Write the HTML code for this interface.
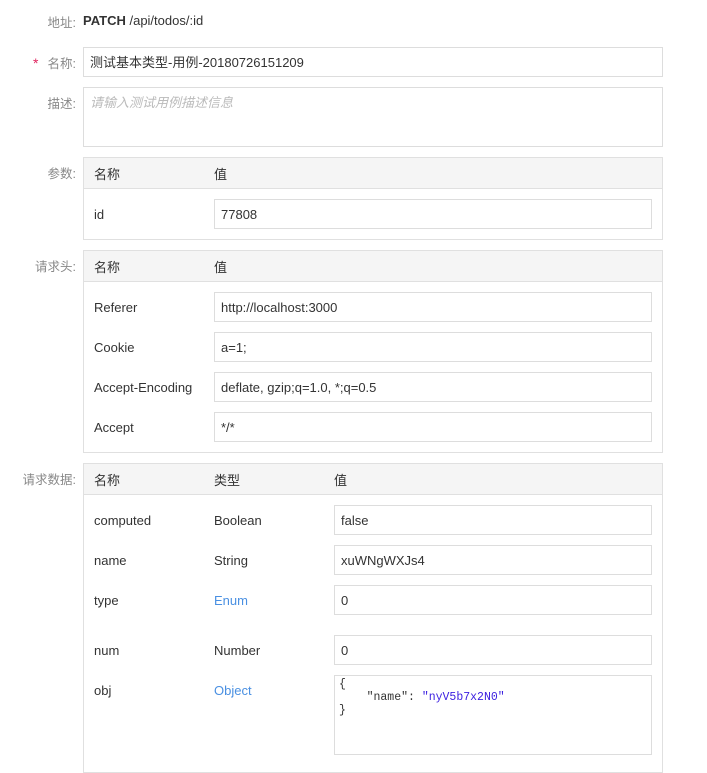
<!DOCTYPE html>
<html><head><meta charset="utf-8"><style>
*{margin:0;padding:0;box-sizing:border-box}
body{width:707px;height:759px;overflow:hidden;background:#fff;font-family:"Liberation Sans","Noto Sans CJK SC",sans-serif;font-size:13px;color:#333;position:relative}
.a{position:absolute;white-space:nowrap}
.lbl{position:absolute;right:631px;color:#888;font-size:12.5px;white-space:nowrap}
.box{position:absolute;border:1px solid #e0e0e0;background:#fff}
.hd{position:absolute;background:#f5f5f5;border-bottom:1px solid #e0e0e0;left:0;right:0;top:0;height:31px}
.in{position:absolute;border:1px solid #ddd;background:#fff;padding-left:6px;line-height:29px;height:30px;font-size:13px;color:#333}
.blue{color:#4a90e2}
</style></head><body>
<div class="lbl" style="top:12px">地址:</div>
<div class="a" style="left:83px;top:13px;font-size:13px"><b>PATCH</b> /api/todos/:id</div>

<div class="a" style="left:33px;top:55px;color:#e0245e;font-size:14px">*</div>
<div class="lbl" style="top:53px">名称:</div>
<div class="in" style="left:83px;top:47px;width:580px">测试基本类型-用例-20180726151209</div>

<div class="lbl" style="top:93px">描述:</div>
<div class="in" style="left:83px;top:87px;width:580px;height:60px;color:#bbb;font-style:italic">请输入测试用例描述信息</div>

<div class="lbl" style="top:163px">参数:</div>
<div class="box" style="left:83px;top:157px;width:580px;height:83px">
<div class="hd"></div>
<div class="a" style="left:10px;top:6px">名称</div><div class="a" style="left:130px;top:6px">值</div>
<div class="a" style="left:10px;top:49px">id</div>
<div class="in" style="left:130px;top:41px;width:438px">77808</div>
</div>

<div class="lbl" style="top:256px">请求头:</div>
<div class="box" style="left:83px;top:250px;width:580px;height:203px">
<div class="hd"></div>
<div class="a" style="left:10px;top:6px">名称</div><div class="a" style="left:130px;top:6px">值</div>
<div class="a" style="left:10px;top:49px">Referer</div><div class="in" style="left:130px;top:41px;width:438px">http://localhost:3000</div>
<div class="a" style="left:10px;top:89px">Cookie</div><div class="in" style="left:130px;top:81px;width:438px">a=1;</div>
<div class="a" style="left:10px;top:129px">Accept-Encoding</div><div class="in" style="left:130px;top:121px;width:438px">deflate, gzip;q=1.0, *;q=0.5</div>
<div class="a" style="left:10px;top:169px">Accept</div><div class="in" style="left:130px;top:161px;width:438px">*/*</div>
</div>

<div class="lbl" style="top:469px">请求数据:</div>
<div class="box" style="left:83px;top:463px;width:580px;height:310px">
<div class="hd"></div>
<div class="a" style="left:10px;top:6px">名称</div><div class="a" style="left:130px;top:6px">类型</div><div class="a" style="left:250px;top:6px">值</div>
<div class="a" style="left:10px;top:49px">computed</div><div class="a" style="left:130px;top:49px">Boolean</div><div class="in" style="left:250px;top:41px;width:318px">false</div>
<div class="a" style="left:10px;top:89px">name</div><div class="a" style="left:130px;top:89px">String</div><div class="in" style="left:250px;top:81px;width:318px">xuWNgWXJs4</div>
<div class="a" style="left:10px;top:129px">type</div><div class="a blue" style="left:130px;top:129px">Enum</div><div class="in" style="left:250px;top:121px;width:318px">0</div>
<div class="a" style="left:10px;top:179px">num</div><div class="a" style="left:130px;top:179px">Number</div><div class="in" style="left:250px;top:171px;width:318px">0</div>
<div class="a" style="left:10px;top:219px">obj</div><div class="a blue" style="left:130px;top:219px">Object</div>
<div class="in" style="left:250px;top:211px;width:318px;height:80px;font-family:'Liberation Mono',monospace;font-size:11.5px;line-height:13px;padding-top:2px;padding-left:4px;white-space:pre">{
    "name": <span style="color:#3a1ee0">"nyV5b7x2N0"</span>
}</div>
</div>
</body></html>
